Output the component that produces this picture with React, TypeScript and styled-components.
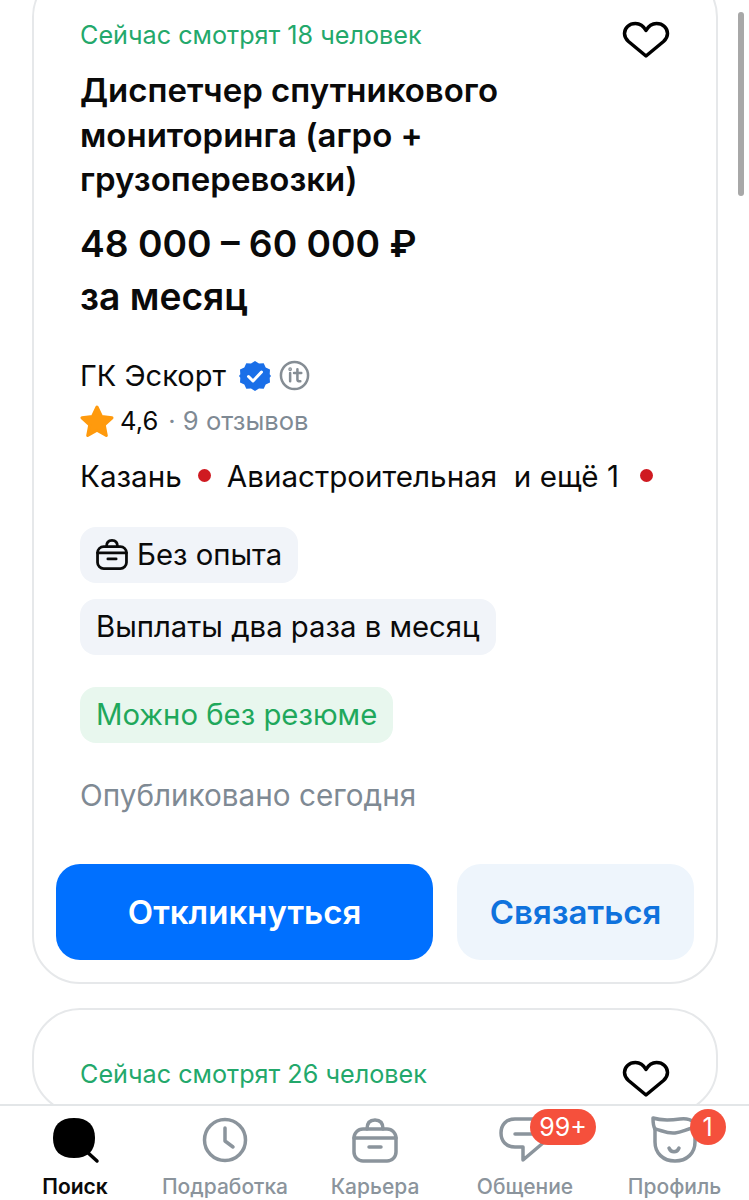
import React from 'react';
import styled, { createGlobalStyle } from 'styled-components';

const GlobalStyle = createGlobalStyle`
  html, body {
    margin: 0;
    padding: 0;
    background: #fff;
  }

  body {
    font-family: Inter, "Noto Sans", "Liberation Sans", sans-serif;
    color: #0a0a0a;
  }
`;

const Screen = styled.div`
  position: relative;
  display: flex;
  flex-direction: column;
  width: 749px;
  height: 1200px;
  overflow: hidden;
  background: #fff;
`;

const Feed = styled.div`
  flex: 1;
  min-height: 0;
  overflow: hidden;
  display: flex;
  flex-direction: column;
  gap: 24px;
  padding: 0 31px 0 32px;
  margin-top: -31px;
`;

const ScrollThumb = styled.div`
  position: absolute;
  top: 12px;
  right: 5px;
  width: 6px;
  height: 184px;
  border-radius: 3px;
  background: #a8a8a8;
`;

const Card = styled.div`
  flex-shrink: 0;
  box-sizing: border-box;
  border: 2px solid #e6e8ea;
  border-radius: 48px;
  padding: 22px;
`;

const Body = styled.div`
  position: relative;
  padding: 26px 24px 0;
`;

const Watching = styled.div`
  font-size: 25.2px;
  line-height: 32px;
  color: #23a86b;
`;

const Favorite = styled.div`
  position: absolute;
  top: 28px;
  right: 24px;
  width: 48px;
  height: 38px;
`;

const Title = styled.h2`
  margin: 17px 0 0;
  font-size: 33px;
  line-height: 44.5px;
  font-weight: 600;
`;

const Salary = styled.div`
  margin-top: 15px;
  font-size: 37.2px;
  line-height: 53px;
  font-weight: 600;
`;

const CompanyRow = styled.div`
  display: flex;
  align-items: center;
  gap: 13px;
  margin-top: 31px;
  height: 44px;
  font-size: 29px;
`;

const CompanyIcons = styled.span`
  display: flex;
  align-items: center;
  gap: 8px;
`;

const RatingRow = styled.div`
  display: flex;
  align-items: center;
  height: 44px;
  margin-top: 1px;
  font-size: 25.6px;
`;

const RatingValue = styled.span`
  margin-left: 6px;
`;

const Reviews = styled.span`
  margin-left: 10px;
  color: #7f8a94;
`;

const AddressRow = styled.div`
  display: flex;
  align-items: center;
  height: 44px;
  margin-top: 11px;
  font-size: 29.6px;
`;

const MetroDot = styled.span<{ $last?: boolean }>`
  width: 13px;
  height: 13px;
  border-radius: 50%;
  background: #cf1a21;
  margin: 0 16px 0 ${p => (p.$last ? '21px' : '16px')};
`;

const Tags = styled.div`
  display: flex;
  flex-direction: column;
  align-items: flex-start;
  gap: 16px;
  margin-top: 29px;
`;

const Tag = styled.div<{ $green?: boolean; $top?: number }>`
  display: flex;
  align-items: center;
  gap: 9px;
  height: 56px;
  padding: 0 16px;
  border-radius: 16px;
  font-size: 29.3px;
  background: ${p => (p.$green ? '#e8f7ee' : '#f1f4f9')};
  color: ${p => (p.$green ? '#1fa85c' : '#0a0a0a')};
  margin-top: ${p => p.$top || 0}px;
`;

const Published = styled.div`
  margin-top: 30px;
  font-size: 29.7px;
  line-height: 44px;
  color: #7f8a94;
`;

const Actions = styled.div`
  display: flex;
  gap: 24px;
  margin-top: 47px;
`;

const ActionButton = styled.div<{ $primary?: boolean }>`
  display: flex;
  align-items: center;
  justify-content: center;
  height: 96px;
  border-radius: 24px;
  font-size: 33px;
  font-weight: 600;
  width: ${p => (p.$primary ? '377px' : '237px')};
  background: ${p => (p.$primary ? '#0070ff' : '#eef5fc')};
  color: ${p => (p.$primary ? '#fff' : '#0f72dd')};
`;

const TabBar = styled.div`
  position: relative;
  flex-shrink: 0;
  display: grid;
  grid-template-columns: 150px 150px 150px 150px 149px;
  box-sizing: border-box;
  height: 96px;
  border-top: 2px solid #e3e6e8;
  background: #fff;
`;

const Tab = styled.div<{ $active?: boolean }>`
  display: flex;
  flex-direction: column;
  align-items: center;
  font-size: 21px;
  line-height: 28px;
  padding-top: 10px;
  font-weight: ${p => (p.$active ? 600 : 500)};
  color: ${p => (p.$active ? '#0a0a0a' : '#8b949c')};
`;

const TabIcon = styled.div`
  position: relative;
  width: 56px;
  height: 52px;
  margin-bottom: 5px;
`;

const Badge = styled.span<{ $wide?: boolean }>`
  position: absolute;
  top: -7px;
  left: ${p => (p.$wide ? '33px' : '43px')};
  display: flex;
  align-items: center;
  justify-content: center;
  box-sizing: border-box;
  width: ${p => (p.$wide ? '66px' : '36px')};
  height: 36px;
  border-radius: 18px;
  background: #f5503c;
  color: #fff;
  font-size: 25px;
  font-weight: 400;
`;

const HeartIcon = () => (
  <svg width="48" height="38" viewBox="0 0 48 38" fill="none">
    <path
      d="M24 9.500C21.500 5 18 2.500 13.500 2.500C7 2.500 2.500 7 2.500 12.500C2.500 15.500 3.800 18 6.500 20.500L24 35L41.500 20.500C44.200 18 45.500 15.500 45.500 12.500C45.500 7 41 2.500 34.500 2.500C30 2.500 26.500 5 24 9.500Z"
      stroke="#000"
      strokeWidth="3.5"
      strokeLinejoin="round"
    />
  </svg>
);

const VerifiedIcon = () => (
  <svg width="32" height="32" viewBox="0 0 32 32">
    <path
      d="M16 1l4 2.600 4.700-.3 2 4.300 4.300 2-.3 4.700L32 16l-1.300 1.700.3 4.700-4.300 2-2 4.300-4.700-.3L16 31l-4-2.600-4.700.3-2-4.300-4.300-2 .3-4.700L0 16l1.300-1.700L1 9.600l4.300-2 2-4.300 4.700.3z"
      fill="#1a6fe8"
    />
    <path d="M9.500 16.500l4.500 4.500 8.500-9" fill="none" stroke="#fff" strokeWidth="3" strokeLinecap="round" strokeLinejoin="round" />
  </svg>
);

const ItAccreditedIcon = () => (
  <svg width="31" height="31" viewBox="0 0 32 32" fill="none" stroke="#858d94" strokeWidth="2.6">
    <circle cx="16" cy="16" r="14" />
    <path d="M11.500 13.500V22M19 9.500V20c0 1.500.8 2 3 2M15.500 13.500H23" strokeLinecap="round" />
    <circle cx="11.500" cy="9.500" r="0.6" fill="#858d94" />
  </svg>
);

const StarIcon = () => (
  <svg width="34" height="32" viewBox="0 0 34 32">
    <path
      d="M17 2l4.500 9.500 10.500 1.300-7.700 7.200 2 10.500L17 25.300 7.700 30.500l2-10.500L2 12.800l10.500-1.300z"
      fill="#ff9a0d"
      stroke="#ff9a0d"
      strokeWidth="3"
      strokeLinejoin="round"
    />
  </svg>
);

const casePaths = (
  <>
    <rect x="7" y="13" width="42" height="32" rx="9" />
    <path d="M20 13C20 7 23 4 28 4S36 7 36 13" />
    <path d="M7 22h42" />
    <path d="M22 31h12" />
  </>
);

const SmallCaseIcon = () => (
  <svg width="32" height="31" viewBox="5 2 46 45" fill="none" stroke="#0a0a0a" strokeWidth="4" strokeLinecap="round">
    {casePaths}
  </svg>
);

const CareerIcon = () => (
  <svg width="56" height="52" viewBox="0 0 56 52" fill="none" stroke="#8b949c" strokeWidth="3.5" strokeLinecap="round">
    {casePaths}
  </svg>
);

const SearchIcon = () => (
  <svg width="56" height="52" viewBox="0 0 56 52">
    <path d="M27 2C41 2 48 9 48 22S41 42 27 42 6 35 6 22 13 2 27 2Z" fill="#000" />
    <path d="M39 35l11 10" stroke="#000" strokeWidth="3.5" strokeLinecap="round" />
  </svg>
);

const ClockIcon = () => (
  <svg width="56" height="52" viewBox="0 0 56 52" fill="none" stroke="#8b949c" strokeWidth="3.5" strokeLinecap="round" strokeLinejoin="round">
    <circle cx="28" cy="24" r="20.500" />
    <path d="M28 12v13l8 6" />
  </svg>
);

const ChatIcon = () => (
  <svg width="56" height="52" viewBox="0 0 56 52" fill="none" stroke="#8b949c" strokeWidth="3.5" strokeLinecap="round" strokeLinejoin="round">
    <path d="M40 3H18C9 3 4 9 4 17S9 31 18 31H26V44L46 27" />
    <path d="M18 18H36" />
  </svg>
);

const ProfileIcon = () => (
  <svg width="56" height="52" viewBox="0 0 56 52" fill="none" stroke="#8b949c" strokeWidth="3.5" strokeLinecap="round" strokeLinejoin="round">
    <path d="M8 13C6 10 6 6 6 2C15 5 25 4 33 3C40 2 46 4 48 8" />
    <path d="M8 13C14 14 20 18 28 17C35 16 40 13 46 12" />
    <path d="M8 13C8 18 8 22 8 26C8 37 16 45 28 45C40 45 48 37 48 26V10" />
    <path d="M22 32C24 37 30 37 32 32" />
  </svg>
);

const tags = ['Выплаты два раза в месяц'];

const App = () => (
  <Screen>
    <GlobalStyle />
    <Feed>
      <Card>
        <Body>
          <Watching>Сейчас смотрят 18 человек</Watching>
          <Favorite>
            <HeartIcon />
          </Favorite>
          <Title>
            Диспетчер спутникового
            <br />
            мониторинга (агро +
            <br />
            грузоперевозки)
          </Title>
          <Salary>
            48 000 – 60 000 ₽
            <br />
            за месяц
          </Salary>
          <CompanyRow>
            ГК Эскорт
            <CompanyIcons>
              <VerifiedIcon />
              <ItAccreditedIcon />
            </CompanyIcons>
          </CompanyRow>
          <RatingRow>
            <StarIcon />
            <RatingValue>4,6</RatingValue>
            <Reviews>· 9 отзывов</Reviews>
          </RatingRow>
          <AddressRow>
            Казань
            <MetroDot />
            Авиастроительная&nbsp; и ещё 1
            <MetroDot $last />
          </AddressRow>
          <Tags>
            <Tag>
              <SmallCaseIcon />
              Без опыта
            </Tag>
            {tags.map(tag => (
              <Tag key={tag}>{tag}</Tag>
            ))}
            <Tag $green $top={16}>
              Можно без резюме
            </Tag>
          </Tags>
          <Published>Опубликовано сегодня</Published>
        </Body>
        <Actions>
          <ActionButton $primary>Откликнуться</ActionButton>
          <ActionButton>Связаться</ActionButton>
        </Actions>
      </Card>
      <Card>
        <Body>
          <Watching>Сейчас смотрят 26 человек</Watching>
          <Favorite>
            <HeartIcon />
          </Favorite>
        </Body>
      </Card>
    </Feed>
    <ScrollThumb />
    <TabBar>
      <Tab $active>
        <TabIcon>
          <SearchIcon />
        </TabIcon>
        Поиск
      </Tab>
      <Tab>
        <TabIcon>
          <ClockIcon />
        </TabIcon>
        Подработка
      </Tab>
      <Tab>
        <TabIcon>
          <CareerIcon />
        </TabIcon>
        Карьера
      </Tab>
      <Tab>
        <TabIcon>
          <ChatIcon />
          <Badge $wide>99+</Badge>
        </TabIcon>
        Общение
      </Tab>
      <Tab>
        <TabIcon>
          <ProfileIcon />
          <Badge>1</Badge>
        </TabIcon>
        Профиль
      </Tab>
    </TabBar>
  </Screen>
);

export default App;
